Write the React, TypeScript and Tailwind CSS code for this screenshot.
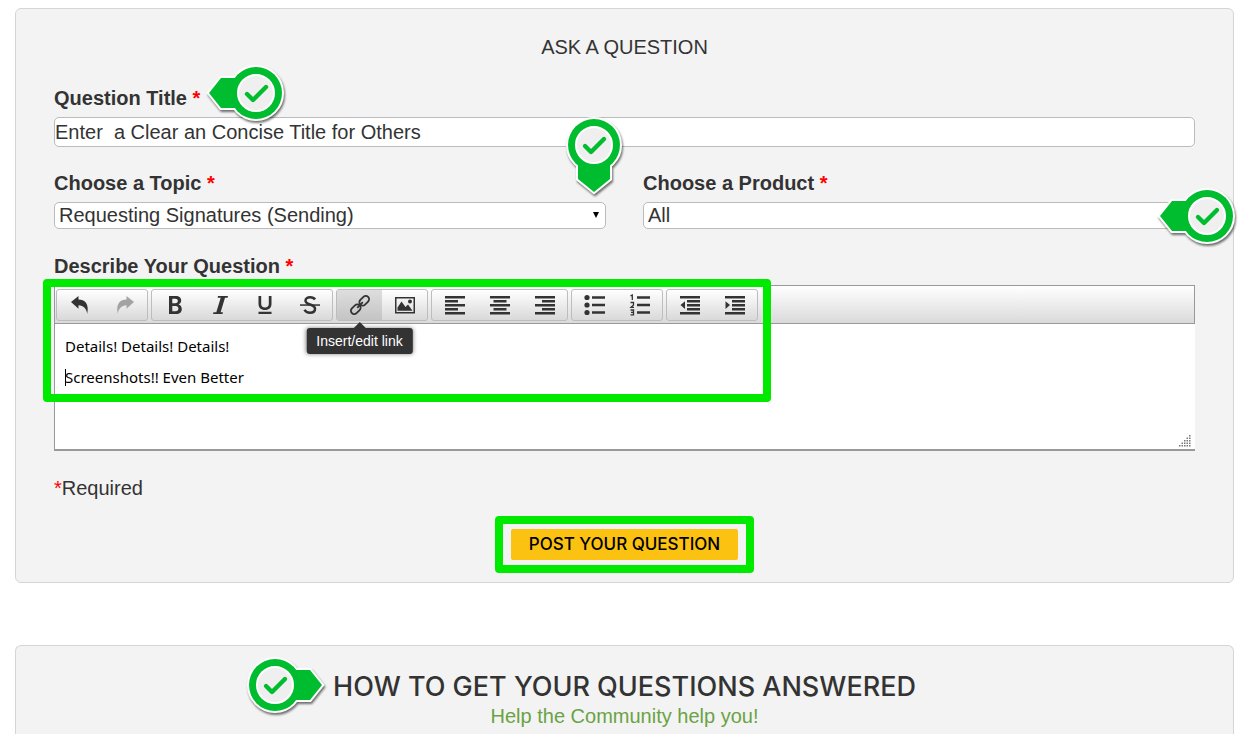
import React from "react";

type Direction = "left" | "right" | "down";

const TAILS: Record<Direction, string> = {
  right: "M12 -15H35L47 0L35 15H12Z",
  left: "M-12 -15H-35L-47 0L-35 15H-12Z",
  down: "M-16 12V34L0 47L16 34V12Z",
};

function CheckPin({ direction, className }: { direction: Direction; className: string }) {
  return (
    <svg
      viewBox="-52 -52 104 104"
      aria-hidden="true"
      className={`pointer-events-none absolute z-20 size-[104px] drop-shadow-[1px_2px_1px_rgba(0,0,0,0.55)] ${className}`}
    >
      <g fill="#fff" stroke="#fff" strokeWidth="4">
        <path d={TAILS[direction]} />
        <circle r="26" />
      </g>
      <g fill="#00bd2f">
        <path d={TAILS[direction]} />
        <circle r="26" />
      </g>
      <circle r="18" fill="#efefef" stroke="#fff" strokeWidth="2" />
      <path d="M-9 1L-3 7L10 -6" fill="none" stroke="#00bd2f" strokeWidth="4.4" strokeLinecap="round" strokeLinejoin="round" />
    </svg>
  );
}

function Icon({ children, faded }: { children: React.ReactNode; faded?: boolean }) {
  return (
    <svg viewBox="0 0 24 24" aria-hidden="true" className={faded ? "size-6 text-[#a3a3a3]" : "size-6 text-[#333]"} fill="currentColor">
      {children}
    </svg>
  );
}

const Bars = ({ rows }: { rows: [number, number][] }) => (
  <>
    {rows.map(([x, w], i) => (
      <rect key={i} x={x} y={3 + i * 4} width={w} height="2.5" />
    ))}
  </>
);

const UNDO = "M3 9L10.500 3V6.500C16.500 6.600 21.500 10.500 19.200 21C18.600 15.800 15.500 12.500 10.500 12.300V15.800Z";

const GROUPS: { label: string; icon: React.ReactNode }[][] = [
  [
    { label: "Undo", icon: <Icon><path d={UNDO} /></Icon> },
    { label: "Redo", icon: <Icon faded><path transform="translate(24 0) scale(-1 1)" d={UNDO} /></Icon> },
  ],
  [
    { label: "Bold", icon: <Icon><path fillRule="evenodd" d="M6 3H12.5C16.500 3 18.200 5 18.200 7.500C18.200 9.500 17 10.800 15.500 11.400C17.500 12 18.800 13.500 18.800 16C18.800 19 16.800 21 12.800 21H6ZM9.300 5.800V10.200H12.300C14 10.200 14.800 9.300 14.800 8C14.800 6.600 14 5.800 12.300 5.800ZM9.300 13V18.200H12.500C14.500 18.200 15.400 17.200 15.400 15.600C15.400 14 14.500 13 12.500 13Z" /></Icon> },
    { label: "Italic", icon: <Icon><path d="M10 3H20L19.600 4.700H17L12.600 19.300H15L14.500 21H5L5.500 19.300H8.300L12.700 4.700H9.600Z" /></Icon> },
    { label: "Underline", icon: <Icon><path d="M5.500 3H8.200V11C8.200 13.200 9.600 14.600 12 14.600C14.400 14.600 15.800 13.200 15.800 11V3H18.500V11C18.500 14.800 16 17 12 17C8 17 5.500 14.800 5.500 11ZM5.500 18.800H18.500V21H5.500Z" /></Icon> },
    { label: "Strikethrough", icon: <Icon><path d="M17 6.500C16 4.900 14.400 4.200 12.200 4.200C9.300 4.200 7.500 5.600 7.500 7.700C7.500 12.500 17 10.500 17 15.800C17 18.300 15 19.800 12 19.800C9.500 19.800 7.500 18.800 6.500 16.800" fill="none" stroke="currentColor" strokeWidth="2.500" /><rect x="2" y="11.300" width="20" height="1.500" /></Icon> },
  ],
  [
    { label: "Insert/edit link", icon: <Icon><g fill="none" stroke="currentColor" strokeWidth="1.800" transform="rotate(-45 12 12)"><rect x="0.500" y="8.700" width="11" height="6.600" rx="3.300" /><rect x="12.500" y="8.700" width="11" height="6.600" rx="3.300" /><path d="M8 12H16" /></g></Icon> },
    { label: "Insert image", icon: <Icon><path fillRule="evenodd" d="M2 4H22V20.500H2ZM3.500 5.500V19H20.500V5.500Z" /><path d="M4.500 17.800V14.500L8.500 8.500L12.500 14L15 11.500L19.500 17.800Z" /><circle cx="17" cy="8.600" r="2" /></Icon> },
  ],
  [
    { label: "Align left", icon: <Icon><Bars rows={[[2, 20], [2, 13], [2, 20], [2, 13], [2, 20]]} /></Icon> },
    { label: "Align center", icon: <Icon><Bars rows={[[2, 20], [5.5, 13], [2, 20], [5.5, 13], [2, 20]]} /></Icon> },
    { label: "Align right", icon: <Icon><Bars rows={[[2, 20], [9, 13], [2, 20], [9, 13], [2, 20]]} /></Icon> },
  ],
  [
    { label: "Bulleted list", icon: <Icon><circle cx="4" cy="4.500" r="2.600" /><circle cx="4" cy="12" r="2.600" /><circle cx="4" cy="19.500" r="2.600" /><path d="M9 3.300H22V5.800H9ZM9 10.800H22V13.300H9ZM9 18.300H22V20.800H9Z" /></Icon> },
    { label: "Numbered list", icon: <Icon><path d="M9 3.300H22V5.800H9ZM9 10.800H22V13.300H9ZM9 18.300H22V20.800H9Z" /><path d="M2.500 2.800L4.300 2V7M2.500 9.500H5.500V12L3 14.300H6M2.500 17H5.500V21.800H2.500M3 19.300H5.500" fill="none" stroke="currentColor" strokeWidth="1.300" /></Icon> },
  ],
  [
    { label: "Outdent", icon: <Icon><path d="M2 3H22V5.500H2ZM9 7H22V9.500H9ZM9 11H22V13.500H9ZM9 15H22V17.500H9ZM2 19H22V21.500H2ZM7 8.200V16L2.500 12Z" /></Icon> },
    { label: "Indent", icon: <Icon><path d="M2 3H22V5.500H2ZM9 7H22V9.500H9ZM9 11H22V13.500H9ZM9 15H22V17.500H9ZM2 19H22V21.500H2ZM2.500 8.200V16L7 12Z" /></Icon> },
  ],
];

function Label({ htmlFor, children }: { htmlFor: string; children: React.ReactNode }) {
  return (
    <label htmlFor={htmlFor} className="mb-[5px] block font-bold">
      {children} <span className="text-[#f00]">*</span>
    </label>
  );
}

function SelectField({ id, options }: { id: string; options: string[] }) {
  return (
    <>
      <select id={id} className="block h-[27px] w-full appearance-none rounded-[5px] border border-[#bbb] bg-white pb-[2px] pl-1 leading-6">
        {options.map((o) => (
          <option key={o}>{o}</option>
        ))}
      </select>
      <svg viewBox="0 0 6 6" aria-hidden="true" className="pointer-events-none absolute top-[10px] right-[7px] size-[6px]">
        <path d="M0 0H6L3 6Z" />
      </svg>
    </>
  );
}

function Toolbar() {
  return (
    <div role="toolbar" aria-label="Formatting" className="flex h-[39px] items-center gap-[3px] border-y border-r border-[#999] bg-linear-to-b from-white to-[#dadada] pl-px">
      {GROUPS.map((group, g) => (
        <div key={g} className="flex h-8 shrink-0 rounded-[3px] border border-[#bdbdbd] bg-linear-to-b from-white to-[#d9d9d9]">
          {group.map(({ label, icon }) => {
            const active = label === "Insert/edit link";
            return (
              <div key={label} className="relative">
                <button
                  type="button"
                  aria-label={label}
                  className={
                    active
                      ? "flex h-[30px] w-[45px] items-center justify-center rounded-l-[2px] bg-linear-to-b from-[#dedede] to-[#c4c4c4]"
                      : "flex h-[30px] w-[45px] items-center justify-center"
                  }
                >
                  {icon}
                </button>
                {active && (
                  <div role="tooltip" className="absolute top-[38px] left-1/2 z-10 -translate-x-1/2 rounded-[3px] bg-[#333] px-[10px] text-[14px] leading-[26px] whitespace-nowrap text-white shadow-[0_0_4px_rgba(0,0,0,0.5)]">
                    <svg viewBox="0 0 12 6" aria-hidden="true" className="absolute -top-[6px] left-1/2 h-[6px] w-3 -translate-x-1/2 fill-[#333]">
                      <path d="M0 6L6 0L12 6Z" />
                    </svg>
                    Insert/edit link
                  </div>
                )}
              </div>
            );
          })}
        </div>
      ))}
    </div>
  );
}

const GRIP_ROWS = [0, 1, 2, 3, 4];

export default function App() {
  return (
    <div className="flex min-h-screen flex-col gap-[62px] bg-white pt-2 pr-[9px] pl-[15px] font-['Liberation_Sans',Arial,sans-serif] text-[20px] leading-7 text-[#333]">
      <form onSubmit={(e) => e.preventDefault()} className="rounded-md border border-[#d5d5d5] bg-[#f3f3f3] px-[38px] pt-6 pb-[22px]">
        <h2 className="mb-[23px] text-center">ASK A QUESTION</h2>

        <div className="relative mb-[22px]">
          <Label htmlFor="title">Question Title</Label>
          <input id="title" type="text" defaultValue="Enter  a Clear an Concise Title for Others" className="block h-[30px] w-full rounded-[5px] border border-[#bbb] bg-white" />
          <CheckPin direction="left" className="-top-[43px] left-[150px]" />
        </div>

        <div className="mb-[23px] grid grid-cols-2 gap-[37px]">
          <div>
            <Label htmlFor="topic">Choose a Topic</Label>
            <div className="relative">
              <SelectField id="topic" options={["Requesting Signatures (Sending)"]} />
              <CheckPin direction="down" className="-top-[109px] -right-10" />
            </div>
          </div>
          <div>
            <Label htmlFor="product">Choose a Product</Label>
            <div className="relative">
              <SelectField id="product" options={["All"]} />
              <CheckPin direction="left" className="-top-[38px] -right-16" />
            </div>
          </div>
        </div>

        <Label htmlFor="details">Describe Your Question</Label>
        <div className="relative mb-[23px] border-b-2 border-l border-b-[#999] border-l-[#999] bg-white">
          <Toolbar />
          <textarea
            id="details"
            rows={4}
            defaultValue={"Details! Details! Details!\nScreenshots!! Even Better"}
            className="block h-[125px] w-full resize-none bg-transparent px-[10px] pt-[7px] font-['Noto_Sans',sans-serif] text-[15px] leading-[31px] text-black outline-none"
          />
          <span aria-hidden="true" className="absolute top-[84px] left-[10px] h-[17px] w-px bg-black" />
          <svg viewBox="0 0 12 12" aria-hidden="true" className="absolute right-1 bottom-[2px] size-3 fill-[#777]">
            {GRIP_ROWS.flatMap((r) =>
              GRIP_ROWS.filter((c) => c >= 4 - r).map((c) => <rect key={`${r}-${c}`} x={c * 2.5} y={r * 2.5} width="1.500" height="1.500" />)
            )}
          </svg>
          <div aria-hidden="true" className="pointer-events-none absolute -top-[6px] -left-3 z-10 h-[123px] w-[728px] rounded-[4px] border-8 border-[#00ea00]" />
        </div>

        <p className="mb-[27px]">
          <span className="text-[#f00]">*</span>Required
        </p>

        <div className="flex justify-center">
          <div className="relative">
            <button type="submit" className="block rounded-[2px] bg-[#fcc211] px-[18px] font-['Inter',sans-serif] text-[17px] leading-[31px] font-medium whitespace-nowrap text-black">
              POST YOUR QUESTION
            </button>
            <div aria-hidden="true" className="pointer-events-none absolute -inset-x-4 -inset-y-[13px] rounded-[4px] border-8 border-[#00ea00]" />
          </div>
        </div>
      </form>

      <section className="flex-1 rounded-t-md border border-b-0 border-[#d5d5d5] bg-[#f3f3f3] pt-[25px] text-center">
        <h2 className="relative mx-auto w-fit font-['Inter',sans-serif] text-[27px] leading-8 font-medium">
          HOW TO GET YOUR QUESTIONS ANSWERED
          <CheckPin direction="right" className="-top-[38px] -left-[110px]" />
        </h2>
        <p className="-mt-px text-[#6aa344]">Help the Community help you!</p>
      </section>
    </div>
  );
}
